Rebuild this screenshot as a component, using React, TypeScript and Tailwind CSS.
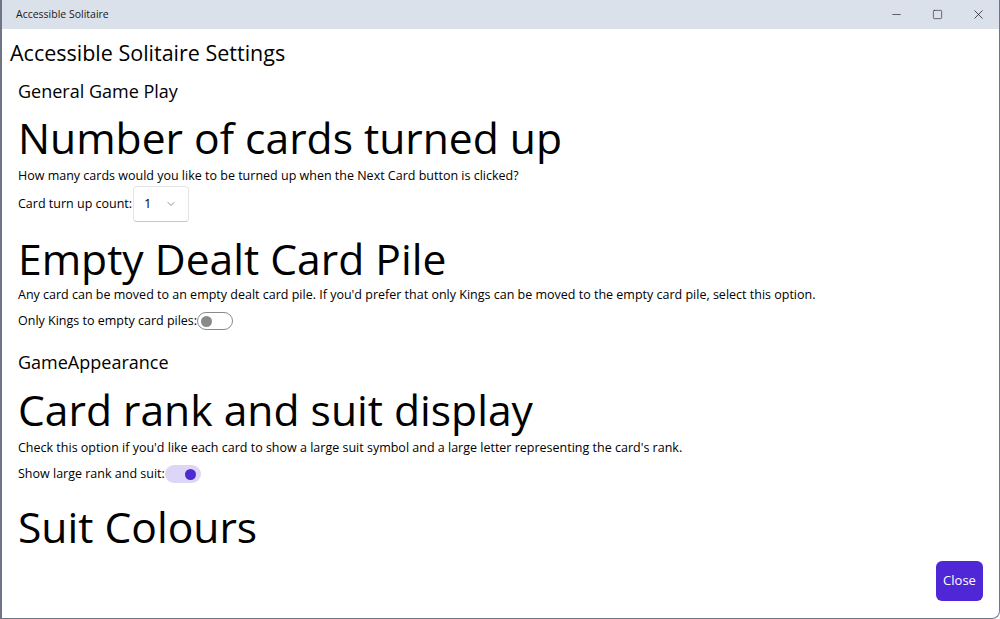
import { ChevronDown, Minus, Square, X } from 'lucide-react'

function Toggle({ on }: { on: boolean }) {
  if (on) {
    return (
      <span className="inline-flex items-center justify-end w-[36px] h-[18px] rounded-full bg-[#ddd6f7] pr-[5px]">
        <span className="w-[11px] h-[11px] rounded-full bg-[#4d2bd3]" />
      </span>
    )
  }
  return (
    <span className="inline-flex items-center w-[36px] h-[18px] rounded-full border border-[#8a8a8a] bg-white pl-[3px]">
      <span className="w-[11px] h-[11px] rounded-full bg-[#8a8a8a]" />
    </span>
  )
}

export default function App() {
  return (
    <div className="w-[1000px] h-[619px] flex flex-col bg-white border-l-2 border-r border-b border-[#707585] rounded-br-[8px] overflow-hidden font-['Open_Sans',sans-serif] text-black">
      <div className="h-[29px] shrink-0 flex items-center bg-[#dbe1ea]">
        <span className="pl-[14px] text-[10.5px] text-[#1a1a1a] flex-1">Accessible Solitaire</span>
        <div className="flex items-center h-full text-[#1a1a1a]">
          <span className="w-[42px] flex justify-center"><Minus size={13} strokeWidth={1.2} /></span>
          <span className="w-[40px] flex justify-center"><Square size={11} strokeWidth={1.3} /></span>
          <span className="w-[42px] flex justify-center"><X size={15} strokeWidth={1.2} /></span>
        </div>
      </div>

      <div className="flex-1 flex flex-col pl-[8px] pr-[16px] relative">
        <h1 className="text-[21.5px] leading-[28px] mt-[10px]">Accessible Solitaire Settings</h1>

        <div className="pl-[8px] flex flex-col">
          <h2 className="text-[18px] leading-[24px] mt-[12px]">General Game Play</h2>

          <h3 className="text-[42.6px] leading-[56px] mt-[6px]">Number of cards turned up</h3>
          <p className="text-[12.5px] leading-[18px] mt-[2px]">How many cards would you like to be turned up when the Next Card button is clicked?</p>
          <div className="flex items-center mt-[1px] text-[12.5px]">
            <span>Card turn up count:</span>
            <span className="ml-[1px] w-[56px] h-[36px] flex items-center justify-between pl-[10px] pr-[11px] rounded-[4px] border border-[#e5e5e5] border-b-[#c8c8c8] bg-white">
              <span className="text-[13px]">1</span>
              <ChevronDown size={12} strokeWidth={1.3} className="text-[#555]" />
            </span>
          </div>

          <h3 className="text-[42.6px] leading-[56px] mt-[8px]">Empty Dealt Card Pile</h3>
          <p className="text-[12.5px] leading-[18px]">Any card can be moved to an empty dealt card pile. If you'd prefer that only Kings can be moved to the empty card pile, select this option.</p>
          <div className="flex items-center mt-[8px] text-[12.5px] h-[18px]">
            <span>Only Kings to empty card piles:</span>
            <Toggle on={false} />
          </div>

          <h2 className="text-[18px] leading-[24px] mt-[20px]">GameAppearance</h2>

          <h3 className="text-[42.6px] leading-[56px] mt-[7px]">Card rank and suit display</h3>
          <p className="text-[12.5px] leading-[18px] mt-[2px]">Check this option if you'd like each card to show a large suit symbol and a large letter representing the card's rank.</p>
          <div className="flex items-center mt-[8px] text-[12.5px] h-[18px]">
            <span>Show large rank and suit:</span>
            <Toggle on={true} />
          </div>

          <h3 className="text-[42.6px] leading-[56px] mt-[15px]">Suit Colours</h3>
        </div>

        <div className="flex-1" />
        <div className="flex justify-end pb-[17px] pr-0">
          <button className="w-[47px] h-[40px] rounded-[6px] bg-[#5027d6] text-white text-[13px]">Close</button>
        </div>
      </div>
    </div>
  )
}
